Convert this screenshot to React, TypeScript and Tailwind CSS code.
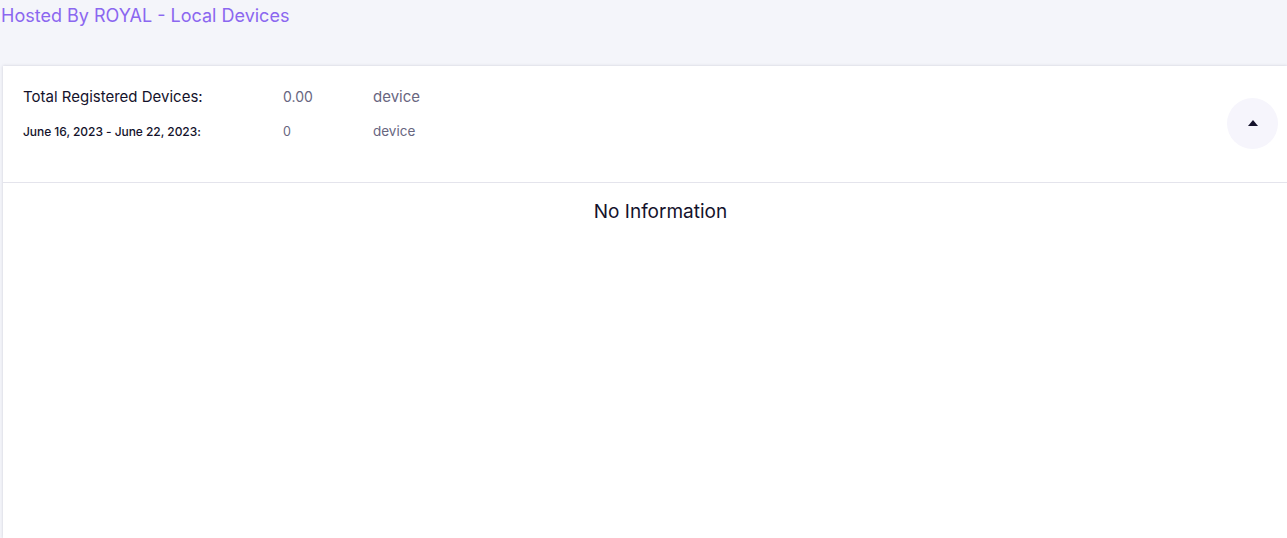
export default function App() {
  return (
    <div className="h-[538px] overflow-hidden bg-[#f4f5fa] font-['Inter',sans-serif]">
      {/* Page title */}
      <div className="h-[66px] pl-px pt-[4px]">
        <h1 className="text-[18px] leading-[24px] font-normal text-[#8b67f0]">Hosted By ROYAL - Local Devices</h1>
      </div>

      {/* Card */}
      <div className="ml-[3px] h-[472px] bg-white shadow-[0_0_3px_rgba(60,60,90,0.2)]">
        <div className="flex h-[117px] items-center border-b border-[#e4e4ec] pl-[20px] pr-[9px]">
          <div className="flex-1 self-start pt-[19px]">
            <div className="flex h-[24px] items-baseline text-[15px] leading-[24px] text-[#68667f]">
              <span className="w-[260px] text-[#14122b]">Total Registered Devices:</span>
              <span className="w-[90px] text-[14px]">0.00</span>
              <span>device</span>
            </div>
            <div className="mt-[10px] flex h-[24px] items-baseline text-[13.5px] leading-[24px] text-[#68667f]">
              <span className="w-[260px] text-[12px] font-medium tracking-[-0.05px] text-[#14122b]">June 16, 2023 - June 22, 2023:</span>
              <span className="w-[90px] text-[12.5px]">0</span>
              <span>device</span>
            </div>
          </div>
          <button className="mb-[2px] flex h-[51px] w-[51px] items-center justify-center rounded-full bg-[#f6f5fc]">
            <span className="h-0 w-0 border-x-[5px] border-b-[6px] border-x-transparent border-b-[#14122b]" />
          </button>
        </div>
        <div className="pt-[15px] pl-[31px] text-center text-[19px] leading-[28px] text-[#14122b]">No Information</div>
      </div>
    </div>
  )
}
